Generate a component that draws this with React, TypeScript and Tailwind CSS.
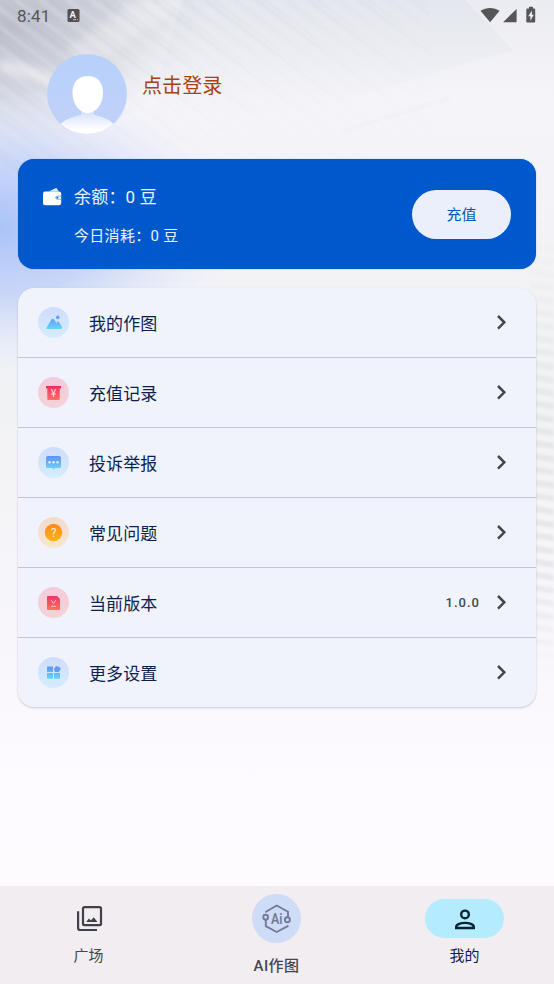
import type { ReactNode } from "react";

const SANS = "font-['Roboto','Noto_Sans_CJK_SC',sans-serif]";

function Backdrop() {
  return (
    <svg className="absolute inset-0" width="554" height="984" viewBox="0 0 554 984" aria-hidden="true">
      <defs>
        <linearGradient id="base" x1="0" y1="0" x2="0" y2="1">
          <stop offset="0" stopColor="#ebecf1" />
          <stop offset="0.1" stopColor="#f5f4f9" />
          <stop offset="0.4" stopColor="#f1f2f4" />
          <stop offset="0.65" stopColor="#f8f6fb" />
          <stop offset="0.8" stopColor="#fdfbff" />
          <stop offset="1" stopColor="#fefbff" />
        </linearGradient>
        <radialGradient id="grey" gradientUnits="userSpaceOnUse" cx="0" cy="0" r="1" gradientTransform="translate(10 25) rotate(-20) scale(225 135)">
          <stop offset="0" stopColor="#bdc0cb" />
          <stop offset="0.5" stopColor="#c9ccd6" stopOpacity="0.75" />
          <stop offset="1" stopColor="#dfe1e8" stopOpacity="0" />
        </radialGradient>
        <radialGradient id="blue" gradientUnits="userSpaceOnUse" cx="0" cy="0" r="1" gradientTransform="translate(0 228) scale(235 150)">
          <stop offset="0" stopColor="#abc3f8" />
          <stop offset="0.45" stopColor="#bfcff8" stopOpacity="0.8" />
          <stop offset="1" stopColor="#e3e9fa" stopOpacity="0" />
        </radialGradient>
        <linearGradient id="cool" x1="0" y1="0" x2="0" y2="1">
          <stop offset="0" stopColor="#e3e6ed" />
          <stop offset="1" stopColor="#eff0f5" stopOpacity="0.1" />
        </linearGradient>
        <linearGradient id="fadeTop" x1="0" y1="0" x2="0.75" y2="1">
          <stop offset="0" stopColor="#fff" />
          <stop offset="0.5" stopColor="#fff" stopOpacity="0.35" />
          <stop offset="1" stopColor="#fff" stopOpacity="0" />
        </linearGradient>
        <linearGradient id="fadeSide" x1="0" y1="0" x2="0" y2="1">
          <stop offset="0" stopColor="#fff" stopOpacity="0" />
          <stop offset="0.4" stopColor="#fff" />
          <stop offset="0.7" stopColor="#fff" />
          <stop offset="0.92" stopColor="#fff" stopOpacity="0" />
        </linearGradient>
        <mask id="maskTop"><rect width="430" height="180" fill="url(#fadeTop)" /></mask>
        <mask id="maskSide"><rect x="530" y="220" width="24" height="500" fill="url(#fadeSide)" /></mask>
        <pattern id="streaks" width="60" height="31" patternUnits="userSpaceOnUse" patternTransform="rotate(37)">
          <rect y="0" width="60" height="1.500" fill="#8d93a5" fillOpacity="0.18" />
          <rect y="5" width="60" height="4" fill="#fff" fillOpacity="0.16" />
          <rect y="13" width="60" height="1.200" fill="#8d93a5" fillOpacity="0.13" />
          <rect y="20" width="60" height="3" fill="#fff" fillOpacity="0.2" />
          <rect y="26" width="60" height="1" fill="#8d93a5" fillOpacity="0.12" />
        </pattern>
        <pattern id="ribs" width="60" height="13" patternUnits="userSpaceOnUse" patternTransform="rotate(9)">
          <rect width="60" height="6" fill="#dcdde0" fillOpacity="0.55" />
        </pattern>
        <filter id="soft" x="-30%" y="-60%" width="160%" height="220%"><feGaussianBlur stdDeviation="5" /></filter>
        <filter id="hair"><feGaussianBlur stdDeviation="0.8" /></filter>
      </defs>
      <rect width="554" height="984" fill="url(#base)" />
      <path d="M182 0H465L513 50L300 112H150Z" fill="url(#cool)" />
      <rect width="300" height="190" fill="url(#grey)" />
      <path d="M135 0L188 0L85 72L66 50Z" fill="#f5f5f8" fillOpacity="0.4" filter="url(#soft)" />
      <path d="M0 58L60 76V88L0 70Z" fill="#fff" fillOpacity="0.55" filter="url(#soft)" />
      <rect y="70" width="240" height="310" fill="url(#blue)" />
      <path d="M450 98L340 132" stroke="#e9eaef" strokeWidth="3" strokeOpacity="0.4" filter="url(#hair)" />
      <rect width="430" height="180" fill="url(#streaks)" mask="url(#maskTop)" filter="url(#hair)" />
      <g filter="url(#hair)">
        <rect x="530" y="220" width="24" height="500" fill="url(#ribs)" mask="url(#maskSide)" />
      </g>
    </svg>
  );
}

function StatusBar() {
  return (
    <header className="flex h-8 shrink-0 items-center pl-[17px] pr-[18px] text-[#565659]">
      <span className="text-[17px] leading-8 tracking-[0.2px]">8:41</span>
      <svg className="ml-4 -mt-[3px]" width="13" height="14" viewBox="0 0 13 14">
        <rect x="0.5" y="1" width="12" height="13" rx="1.5" fill="#505053" />
        <text x="2.6" y="10" fontSize="9.5" fontWeight="700" fontFamily="Roboto" fill="#f0f0f3">A</text>
        <path d="M6 11.7h3M10 11.7h1" stroke="#e4e4e8" strokeWidth="0.8" />
      </svg>
      <div className="ml-auto -mt-[3px] flex items-center">
        <svg width="56" height="18" viewBox="0 0 56 18" fill="#565659">
          <path d="M0.500 4.800C6 0.900 14.400 0.900 19.600 4.800L10.100 16.200Z" />
          <path d="M36.600 3v13.200H23Z" />
          <path fillRule="evenodd" d="M49 0.800h4v1.600h1.200q1 0 1 1v12.100q0 1-1 1h-6.900q-1 0-1-1V3.400q0-1 1-1H49ZM52 4.500L48.200 10.200H50.400V14.800L53.800 8.800H51.900Z" />
        </svg>
      </div>
    </header>
  );
}

function Avatar() {
  return (
    <svg width="80" height="80" viewBox="0 0 80 80">
      <defs>
        <clipPath id="round"><circle cx="40" cy="40" r="40" /></clipPath>
        <linearGradient id="avatarBg" x1="0" y1="0" x2="0" y2="1">
          <stop stopColor="#b7d1fb" /><stop offset="1" stopColor="#c2d1f8" />
        </linearGradient>
        <linearGradient id="neck" gradientUnits="userSpaceOnUse" x1="0" y1="57" x2="0" y2="76">
          <stop stopColor="#d4e0fa" /><stop offset="1" stopColor="#fff" />
        </linearGradient>
      </defs>
      <g clipPath="url(#round)">
        <rect width="80" height="80" fill="url(#avatarBg)" />
        <path d="M34 54h13v7c7 1.500 15 4 21 10v9H12v-9c7-6 15-8.500 22-10Z" fill="url(#neck)" />
        <path d="M40.700 22C50.500 22 56 28.500 56 38.500C56 51 48.500 59 40.700 59S25.500 51 25.500 38.500C25.500 28.500 31 22 40.700 22Z" fill="#fff" />
      </g>
    </svg>
  );
}

type Tone = "blue" | "red" | "orange";
const tones: Record<Tone, string> = {
  blue: "bg-linear-to-b from-[#cfdcfc] to-[#d5edfc]",
  red: "bg-linear-to-b from-[#f4cbdb] to-[#f4d2d8]",
  orange: "bg-linear-to-b from-[#f2dbd0] to-[#f6e7cd]",
};

const glyphs: Record<string, ReactNode> = {
  picture: (
    <>
      <path d="M8.200 21.200L13.600 12.300q1.200-1.300 2.300 0l2.500 3.700 1.200-1.400q.8-.6 1.500.3l3 5.300q.4 1.700-1 1.900H9.200q-1.700-.1-1-.9Z" fill="url(#gBlue)" />
      <circle cx="19.800" cy="10.400" r="1.800" fill="#699bf7" />
    </>
  ),
  recharge: (
    <>
      <path d="M8 9h15v2.500h-1.300V22q0 1-1 1H10.300q-1 0-1-1V11.500H8Z" fill="url(#gRed)" />
      <path d="M8 9h15v1.200H8Z" fill="#ed2861" />
      <text x="15.500" y="19.800" textAnchor="middle" fontSize="10.500" fontWeight="400" fontFamily="Roboto" fill="#ffe0e3">¥</text>
    </>
  ),
  chat: (
    <>
      <path d="M10 9h11q2 0 2 2v8.500q0 1.500-2 1.500h-4l-1.500 1.500-1.500-1.500H10q-2 0-2-1.500V11q0-2 2-2Z" fill="url(#gBlue)" />
      <g fill="#fff" fillOpacity="0.8"><circle cx="11.500" cy="15.300" r="1.200" /><circle cx="15.500" cy="15.300" r="1.200" /><circle cx="19.500" cy="15.300" r="1.200" /></g>
    </>
  ),
  question: (
    <>
      <circle cx="15.500" cy="15.500" r="8.700" fill="url(#gOrange)" />
      <text x="15.500" y="19.700" textAnchor="middle" fontSize="12" fontWeight="400" fontFamily="Roboto" fill="#fff0d5">?</text>
    </>
  ),
  version: (
    <>
      <path d="M10 9h9l3 3v10q0 1-1 1H10q-1 0-1-1V10q0-1 1-1Z" fill="url(#gRed)" />
      <path d="M13 13l2.500 3.300L18 13M13 19.300h5" fill="none" stroke="#ffc5d0" strokeWidth="1" />
    </>
  ),
  settings: (
    <g fill="url(#gBlue)">
      <path d="M9 9.500h6V15H9Z" /><path d="M9 16h6v5.700h-5q-1 0-1-1Z" /><path d="M16 16h6v4.700q0 1-1 1h-5Z" />
      <path d="M18.200 9l3.900 1.300.4 2.300L20.800 15H17l-1.200-3Z" fill="#609bf8" />
    </g>
  ),
};

const rows: { label: string; glyph: string; tone: Tone; value?: string }[] = [
  { label: "我的作图", glyph: "picture", tone: "blue" },
  { label: "充值记录", glyph: "recharge", tone: "red" },
  { label: "投诉举报", glyph: "chat", tone: "blue" },
  { label: "常见问题", glyph: "question", tone: "orange" },
  { label: "当前版本", glyph: "version", tone: "red", value: "1.0.0" },
  { label: "更多设置", glyph: "settings", tone: "blue" },
];

function IconGradients() {
  return (
    <svg className="absolute" width="0" height="0" aria-hidden="true">
      <defs>
        <linearGradient id="gBlue" gradientUnits="userSpaceOnUse" x1="0" y1="9" x2="0" y2="22"><stop stopColor="#5b93f7" /><stop offset="1" stopColor="#6bd3fb" /></linearGradient>
        <linearGradient id="gRed" gradientUnits="userSpaceOnUse" x1="0" y1="9" x2="0" y2="23"><stop stopColor="#f13463" /><stop offset="1" stopColor="#ff6f62" /></linearGradient>
        <linearGradient id="gOrange" x1="0" y1="0" x2="0" y2="1"><stop stopColor="#fa8a1e" /><stop offset="1" stopColor="#ffb20f" /></linearGradient>
      </defs>
    </svg>
  );
}

function Menu() {
  return (
    <section className="mx-[18px] mt-[19px] shrink-0 overflow-hidden rounded-2xl bg-[#f0f3fc] shadow-[0_1px_2px_rgba(60,60,75,0.25)]">
      {rows.map((row) => (
        <div key={row.label} className="flex h-[70px] items-center border-b border-[#c3c5d0] pl-5 pr-[29px] last:h-[69px] last:border-b-0">
          <span className={"size-[31px] rounded-full " + tones[row.tone]}>
            <svg width="31" height="31" viewBox="0 0 31 31">{glyphs[row.glyph]}</svg>
          </span>
          <span className="ml-5 mt-[3px] text-[17px] leading-6 tracking-[0.1px] text-[#0d1f4f]">{row.label}</span>
          <span className="ml-auto text-[13px] font-medium tracking-[1px] text-[#45464f]">{row.value}</span>
          <svg className="ml-[17px] -mt-px" width="10" height="16" viewBox="0 0 10 16" fill="none" stroke="#44464f" strokeWidth="2.500">
            <path d="M1 2L7.300 8.300L1 14.600" />
          </svg>
        </div>
      ))}
    </section>
  );
}

function BottomNav() {
  return (
    <nav className="mt-auto grid h-[98px] shrink-0 grid-cols-[177px_199px_178px] bg-[#f1edf1] text-[15px] leading-5 text-[#45464f]">
      <div className="flex flex-col items-center pt-[19px]">
        <svg className="ml-px" width="27" height="27" viewBox="0 0 27 27" fill="none" stroke="#3f4049" strokeWidth="2.200">
          <rect x="7" y="2.100" width="18" height="18" rx="1.400" />
          <path d="M2.100 6.200V23q0 2 2 2H21" />
          <path d="M10.200 16.900l2.700-3.500 2 2 2.800-3.200 3.800 4.700Z" fill="#3f4049" stroke="none" />
        </svg>
        <span className="mt-3.5">广场</span>
      </div>
      <div className="flex flex-col items-center pt-2">
        <div className="flex size-[49px] items-center justify-center rounded-full bg-[#cedcf8]">
          <svg width="31" height="31" viewBox="0 0 31 31" fill="none" stroke="#737b94" strokeWidth="1.900" strokeLinecap="round">
            <path d="M5 8.700L15.700 2.500L27 8.700V13.500M4.800 17V23.200L15.700 29L26.800 23.200" />
            <circle cx="4.700" cy="14.200" r="2.400" /><circle cx="26.400" cy="16.700" r="2.500" />
            <text x="15.700" y="20.900" textAnchor="middle" fontSize="15.500" fontWeight="600" fontFamily="Roboto" textLength="11.500" lengthAdjust="spacingAndGlyphs" stroke="none" fill="#737b94">Ai</text>
          </svg>
        </div>
        <span className="mt-[13px] font-medium tracking-[0.4px]">AI作图</span>
      </div>
      <div className="flex flex-col items-center pr-[2px] pt-[13px]">
        <div className="flex h-[39px] w-[79px] items-center justify-center rounded-full bg-[#b5ebff]">
          <svg className="ml-px mt-px" width="20" height="21" viewBox="0 0 20 21" fill="none" stroke="#032630" strokeWidth="2.400">
            <circle cx="10" cy="5.400" r="3.800" />
            <path d="M1.200 19V17.900C1.200 15.200 6 13.900 10 13.900s8.800 1.300 8.800 4v1.100Z" />
          </svg>
        </div>
        <span className="mt-2 pl-px text-[#131b4e]">我的</span>
      </div>
    </nav>
  );
}

export default function App() {
  return (
    <main className={"relative h-[984px] w-[554px] overflow-hidden " + SANS}>
      <Backdrop />
      <IconGradients />
      <div className="relative flex h-full flex-col">
        <StatusBar />
        <section className="mt-[22px] flex h-20 shrink-0 pl-[47px]">
          <Avatar />
          <span className="ml-[15px] mt-[18px] text-[20px] leading-7 tracking-[0.1px] text-[#a8430f]">点击登录</span>
        </section>
        <section className="mx-[18px] mt-[25px] flex h-[110px] shrink-0 items-center justify-between rounded-2xl bg-[#0059cc] pl-6 pr-[25px] text-[#e9f3ff] shadow-[0_0_1px_#3681e6]">
          <div className="mt-[5px] grid grid-cols-[32px_auto] gap-y-[15px]">
            <svg className="-mt-px self-center" width="21" height="20" viewBox="0 0 21 20">
              <path d="M6.500 4.500L13.500 1.200q1-.4 1.600.5l1.700 2.800Z" fill="#d9e9fd" />
              <path d="M3 4.600h14q2.200 0 2.200 2V16q0 2.200-2.200 2.200H3Q1 18.200 1 16V6.600q0-2 2-2Z" fill="#fff" />
              <path d="M19.200 9.200h-4q-1.500 0-1.500 1.500t1.500 1.500h4" fill="none" stroke="#5b95e3" strokeWidth="0.800" />
              <circle cx="15.400" cy="10.700" r="0.900" fill="#0059cc" />
            </svg>
            <span className="text-[17px] leading-6 tracking-[0.2px]">余额：0 豆</span>
            <span className="col-start-2 text-[15px] leading-6 tracking-[0.3px]">今日消耗：0 豆</span>
          </div>
          <button className="h-[49px] w-[99px] rounded-full bg-[#ebeffb] pt-0.5 text-[15px] text-[#0059b8]">充值</button>
        </section>
        <Menu />
        <BottomNav />
      </div>
    </main>
  );
}
